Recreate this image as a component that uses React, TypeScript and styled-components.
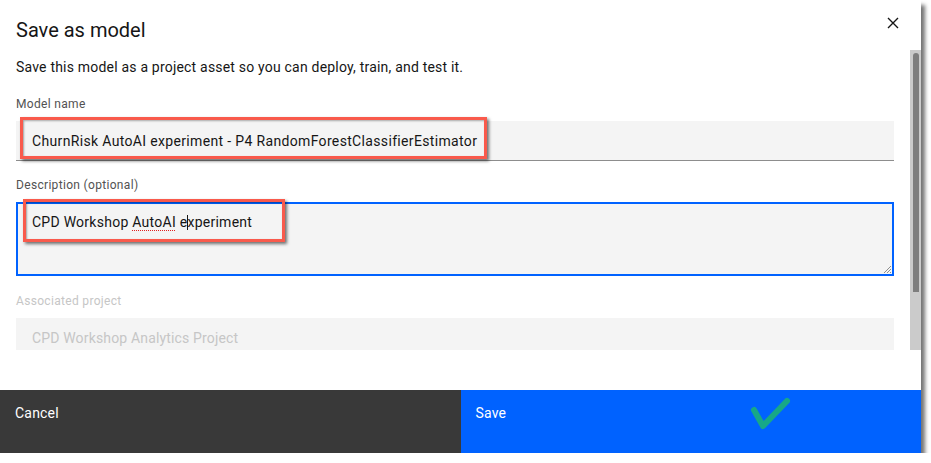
import React from 'react';
import styled, { createGlobalStyle } from 'styled-components';

const Global = createGlobalStyle`
  html, body { margin: 0; padding: 0; background: #ffffff; }
  body {
    font-family: Roboto, "Noto Sans", "Liberation Sans", sans-serif;
    color: #161616;
  }
  * { box-sizing: border-box; }
`;

const Modal = styled.div`
  position: relative;
  width: 921px;
  height: 453px;
  background: #ffffff;
  box-shadow: 4px 5px 4px rgba(0, 0, 0, 0.55);
  display: flex;
  flex-direction: column;
`;

const Header = styled.div`
  height: 50px;
  display: flex;
  align-items: flex-start;
  justify-content: space-between;
  padding-left: 16px;
`;

const Title = styled.h2`
  margin: 16px 0 0 0;
  font-size: 20px;
  line-height: 28px;
  font-weight: 400;
  color: #161616;
`;

const CloseButton = styled.button`
  width: 41px;
  height: 46px;
  margin-right: 8px;
  border: none;
  background: transparent;
  padding: 0;
  display: flex;
  align-items: center;
  justify-content: center;
  color: #161616;
`;

const BodyRow = styled.div`
  height: 300px;
  display: flex;
`;

const Content = styled.div`
  flex: 1;
  overflow: hidden;
  padding: 0 16px 0 16px;
`;

const Intro = styled.p`
  margin: 7px 0 0 0;
  font-size: 14px;
  line-height: 20px;
  letter-spacing: 0.2px;
  color: #161616;
`;

const Field = styled.div<{ $top: number }>`
  margin-top: ${(p) => p.$top}px;
  position: relative;
`;

const Label = styled.div<{ $disabled?: boolean }>`
  font-size: 12px;
  line-height: 16px;
  letter-spacing: 0.32px;
  color: ${(p) => (p.$disabled ? '#c6c6c6' : '#525252')};
  margin-bottom: 9px;
`;

const TextInput = styled.div<{ $disabled?: boolean }>`
  height: 40px;
  background: #f4f4f4;
  border-bottom: 1px solid ${(p) => (p.$disabled ? 'transparent' : '#8d8d8d')};
  padding: 0 16px;
  display: flex;
  align-items: center;
  font-size: 14px;
  line-height: 18px;
  letter-spacing: ${(p) => (p.$disabled ? '0.16px' : '0.34px')};
  color: ${(p) => (p.$disabled ? '#c6c6c6' : '#161616')};
  white-space: nowrap;
`;

const TextArea = styled.div`
  position: relative;
  height: 74px;
  background: #f4f4f4;
  border: 2px solid #0062ff;
  padding: 9px 14px;
  font-size: 14px;
  line-height: 18px;
  letter-spacing: 0.26px;
  color: #161616;
`;

const Spell = styled.span`
  text-decoration: underline dotted #e02020;
  text-decoration-thickness: 1px;
  text-underline-offset: 3px;
`;

const Caret = styled.span`
  display: inline-block;
  width: 1px;
  height: 15px;
  background: #161616;
  vertical-align: -3px;
  margin: 0 -1px 0 0;
`;

const Grip = styled.svg`
  position: absolute;
  right: 0;
  bottom: 0;
`;

const Highlight = styled.div<{ $l: number; $t: number; $w: number; $h: number }>`
  position: absolute;
  left: ${(p) => p.$l}px;
  top: ${(p) => p.$t}px;
  width: ${(p) => p.$w}px;
  height: ${(p) => p.$h}px;
  border: 3px solid #f95a4c;
  box-shadow: 2px 2px 3px rgba(0, 0, 0, 0.55), inset 1px 1px 2px rgba(0, 0, 0, 0.35);
  pointer-events: none;
`;

const ScrollTrack = styled.div`
  width: 11px;
  background: #cbcbcb;
  padding: 3px 2px 0 3px;
`;

const ScrollThumb = styled.div`
  height: 239px;
  background: #7e7e7e;
  border-radius: 3px 3px 0 0;
`;

const Spacer = styled.div`
  height: 40px;
`;

const Footer = styled.div`
  position: relative;
  flex: 1;
  display: flex;
`;

const FooterButton = styled.button<{ $primary?: boolean }>`
  flex: 1;
  border: none;
  margin: 0;
  text-align: left;
  padding: 14px 16px 0 15px;
  font-family: inherit;
  font-size: 14px;
  line-height: 18px;
  letter-spacing: 0.2px;
  color: #ffffff;
  background: ${(p) => (p.$primary ? '#0062ff' : '#393939')};
  display: flex;
  align-items: flex-start;
`;

const Check = styled.svg`
  position: absolute;
  left: 750px;
  top: 6px;
`;

export default function App() {
  return (
    <>
      <Global />
      <Modal>
        <Header>
          <Title>Save as model</Title>
          <CloseButton aria-label="Close">
            <svg width="12" height="12" viewBox="0 0 12 12">
              <path d="M1 1 L11 11 M11 1 L1 11" stroke="#161616" strokeWidth="1.4" fill="none" />
            </svg>
          </CloseButton>
        </Header>
        <BodyRow>
          <Content>
            <Intro>Save this model as a project asset so you can deploy, train, and test it.</Intro>
            <Field $top={19}>
              <Label>Model name</Label>
              <TextInput>ChurnRisk AutoAI experiment - P4 RandomForestClassifierEstimator</TextInput>
              <Highlight $l={4} $t={21} $w={467} $h={42} />
            </Field>
            <Field $top={16}>
              <Label>Description (optional)</Label>
              <TextArea>
                CPD Workshop <Spell>AutoAI</Spell> e<Caret />xperiment
                <Grip width="10" height="10" viewBox="0 0 10 10">
                  <path d="M9 2 L2 9 M9 5 L5 9 M9 8 L8 9" stroke="#8d8d8d" strokeWidth="1" />
                </Grip>
              </TextArea>
              <Highlight $l={7} $t={22} $w={262} $h={43} />
            </Field>
            <Field $top={17}>
              <Label $disabled>Associated project</Label>
              <TextInput $disabled>CPD Workshop Analytics Project</TextInput>
            </Field>
          </Content>
          <ScrollTrack>
            <ScrollThumb />
          </ScrollTrack>
        </BodyRow>
        <Spacer />
        <Footer>
          <FooterButton>Cancel</FooterButton>
          <FooterButton $primary>Save</FooterButton>
          <Check width="42" height="36" viewBox="0 0 42 36">
            <path d="M4 14 L13 30 L37 5" stroke="#17a887" strokeWidth="6" strokeLinecap="round" strokeLinejoin="round" fill="none" />
          </Check>
        </Footer>
      </Modal>
    </>
  );
}
